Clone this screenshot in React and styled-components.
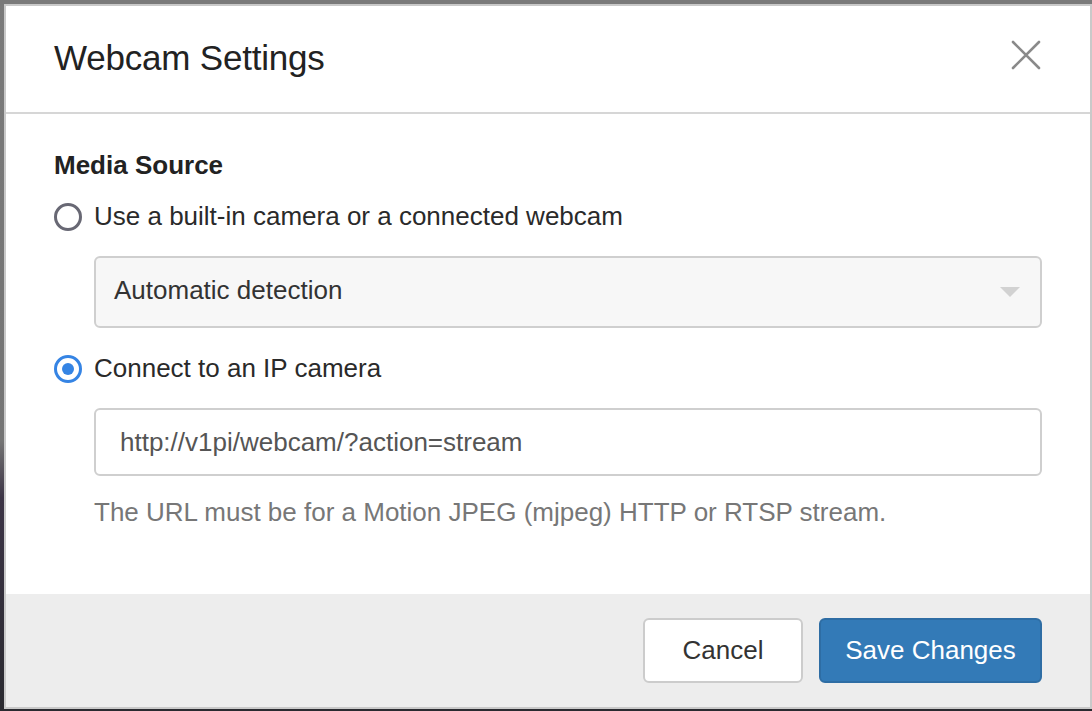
import React, { useState } from 'react'
import styled, { createGlobalStyle } from 'styled-components'

const Global = createGlobalStyle`
  html, body {
    margin: 0;
    padding: 0;
    height: 100%;
  }
  body {
    background: linear-gradient(180deg, #7a7a7a 0%, #747474 62%, #3c3446 70%, #2a2a30 100%);
    font-family: "Liberation Sans", Arial, sans-serif;
    color: #333;
    overflow: hidden;
  }
`

const Backdrop = styled.div`
  width: 1092px;
  height: 711px;
  padding: 4px 0 0 4px;
  box-sizing: border-box;
`

const Modal = styled.div`
  width: 1088px;
  height: 705px;
  box-sizing: border-box;
  border: 2px solid #c9c9c9;
  background: #fff;
  display: flex;
  flex-direction: column;
`

const Header = styled.div`
  height: 106px;
  flex-shrink: 0;
  padding: 0 48px;
  display: flex;
  align-items: center;
  justify-content: space-between;
  border-bottom: 2px solid #d6d6d6;
`

const Title = styled.h4`
  margin: 0;
  font-size: 35px;
  font-weight: 400;
  letter-spacing: -0.2px;
  color: #222;
  padding-bottom: 2px;
`

const CloseButton = styled.button`
  border: 0;
  background: none;
  padding: 0;
  margin: -8px -4px 0 0;
  width: 40px;
  height: 40px;
  display: flex;
  align-items: center;
  justify-content: center;
  cursor: pointer;
`

const Body = styled.div`
  flex: 1;
  padding: 33px 48px 0 48px;
`

const SectionTitle = styled.div`
  font-size: 26px;
  font-weight: 700;
  line-height: 37px;
  color: #222;
  margin-bottom: 14px;
`

const RadioRow = styled.label`
  display: flex;
  align-items: center;
  gap: 12px;
  height: 37px;
  margin-top: ${p => p.$top || 0}px;
  font-size: 26px;
  color: #2a2a2a;
  cursor: pointer;
`

const RadioDot = styled.span`
  width: 28px;
  height: 28px;
  box-sizing: border-box;
  border-radius: 50%;
  border: 3px solid ${p => (p.$checked ? '#3584e4' : '#686874')};
  display: flex;
  align-items: center;
  justify-content: center;
  &::after {
    content: '';
    width: 12px;
    height: 12px;
    border-radius: 50%;
    background: #3584e4;
    display: ${p => (p.$checked ? 'block' : 'none')};
  }
`

const Indented = styled.div`
  margin-left: 40px;
  margin-top: ${p => p.$top || 0}px;
`

const Select = styled.div`
  height: 72px;
  box-sizing: border-box;
  border: 2px solid #cfcfcf;
  border-radius: 6px;
  background: #f7f7f7;
  padding: 0 20px 4px 18px;
  display: flex;
  align-items: center;
  justify-content: space-between;
  font-size: 26px;
  color: #333;
`

const Caret = styled.span`
  width: 0;
  height: 0;
  margin-top: 4px;
  border-left: 10px solid transparent;
  border-right: 10px solid transparent;
  border-top: 10px solid #d2d2d2;
`

const Input = styled.input`
  width: 100%;
  height: 68px;
  box-sizing: border-box;
  border: 2px solid #cfcfcf;
  border-radius: 6px;
  padding: 0 24px;
  font-family: "Liberation Sans", Arial, sans-serif;
  font-size: 26px;
  color: #555;
  background: #fff;
  outline: none;
`

const Help = styled.p`
  margin: 18px 0 0 40px;
  font-size: 26px;
  line-height: 37px;
  color: #777;
`

const Footer = styled.div`
  height: 113px;
  flex-shrink: 0;
  background: #ededed;
  padding: 0 48px;
  box-sizing: border-box;
  display: flex;
  align-items: center;
  justify-content: flex-end;
  gap: 16px;
`

const Button = styled.button`
  width: ${p => p.$w}px;
  height: 65px;
  box-sizing: border-box;
  border-radius: 6px;
  font-family: "Liberation Sans", Arial, sans-serif;
  font-size: 26px;
  cursor: pointer;
  border: 2px solid ${p => (p.$primary ? '#2e6da4' : '#cccccc')};
  background: ${p => (p.$primary ? '#337ab7' : '#fff')};
  color: ${p => (p.$primary ? '#fff' : '#333')};
`

export default function App() {
  const [source, setSource] = useState('ip')
  const [url, setUrl] = useState('http://v1pi/webcam/?action=stream')

  return (
    <>
      <Global />
      <Backdrop>
        <Modal>
          <Header>
            <Title>Webcam Settings</Title>
            <CloseButton aria-label="Close">
              <svg width="30" height="30" viewBox="0 0 30 30">
                <path d="M2 2 L28 28 M28 2 L2 28" stroke="#8a8a8a" strokeWidth="2.6" strokeLinecap="round" />
              </svg>
            </CloseButton>
          </Header>
          <Body>
            <SectionTitle>Media Source</SectionTitle>
            <RadioRow onClick={() => setSource('local')}>
              <RadioDot $checked={source === 'local'} />
              Use a built-in camera or a connected webcam
            </RadioRow>
            <Indented $top={21}>
              <Select>
                Automatic detection
                <Caret />
              </Select>
            </Indented>
            <RadioRow $top={22} onClick={() => setSource('ip')}>
              <RadioDot $checked={source === 'ip'} />
              Connect to an IP camera
            </RadioRow>
            <Indented $top={21}>
              <Input value={url} onChange={e => setUrl(e.target.value)} />
            </Indented>
            <Help>The URL must be for a Motion JPEG (mjpeg) HTTP or RTSP stream.</Help>
          </Body>
          <Footer>
            <Button $w={160}>Cancel</Button>
            <Button $w={223} $primary>Save Changes</Button>
          </Footer>
        </Modal>
      </Backdrop>
    </>
  )
}
